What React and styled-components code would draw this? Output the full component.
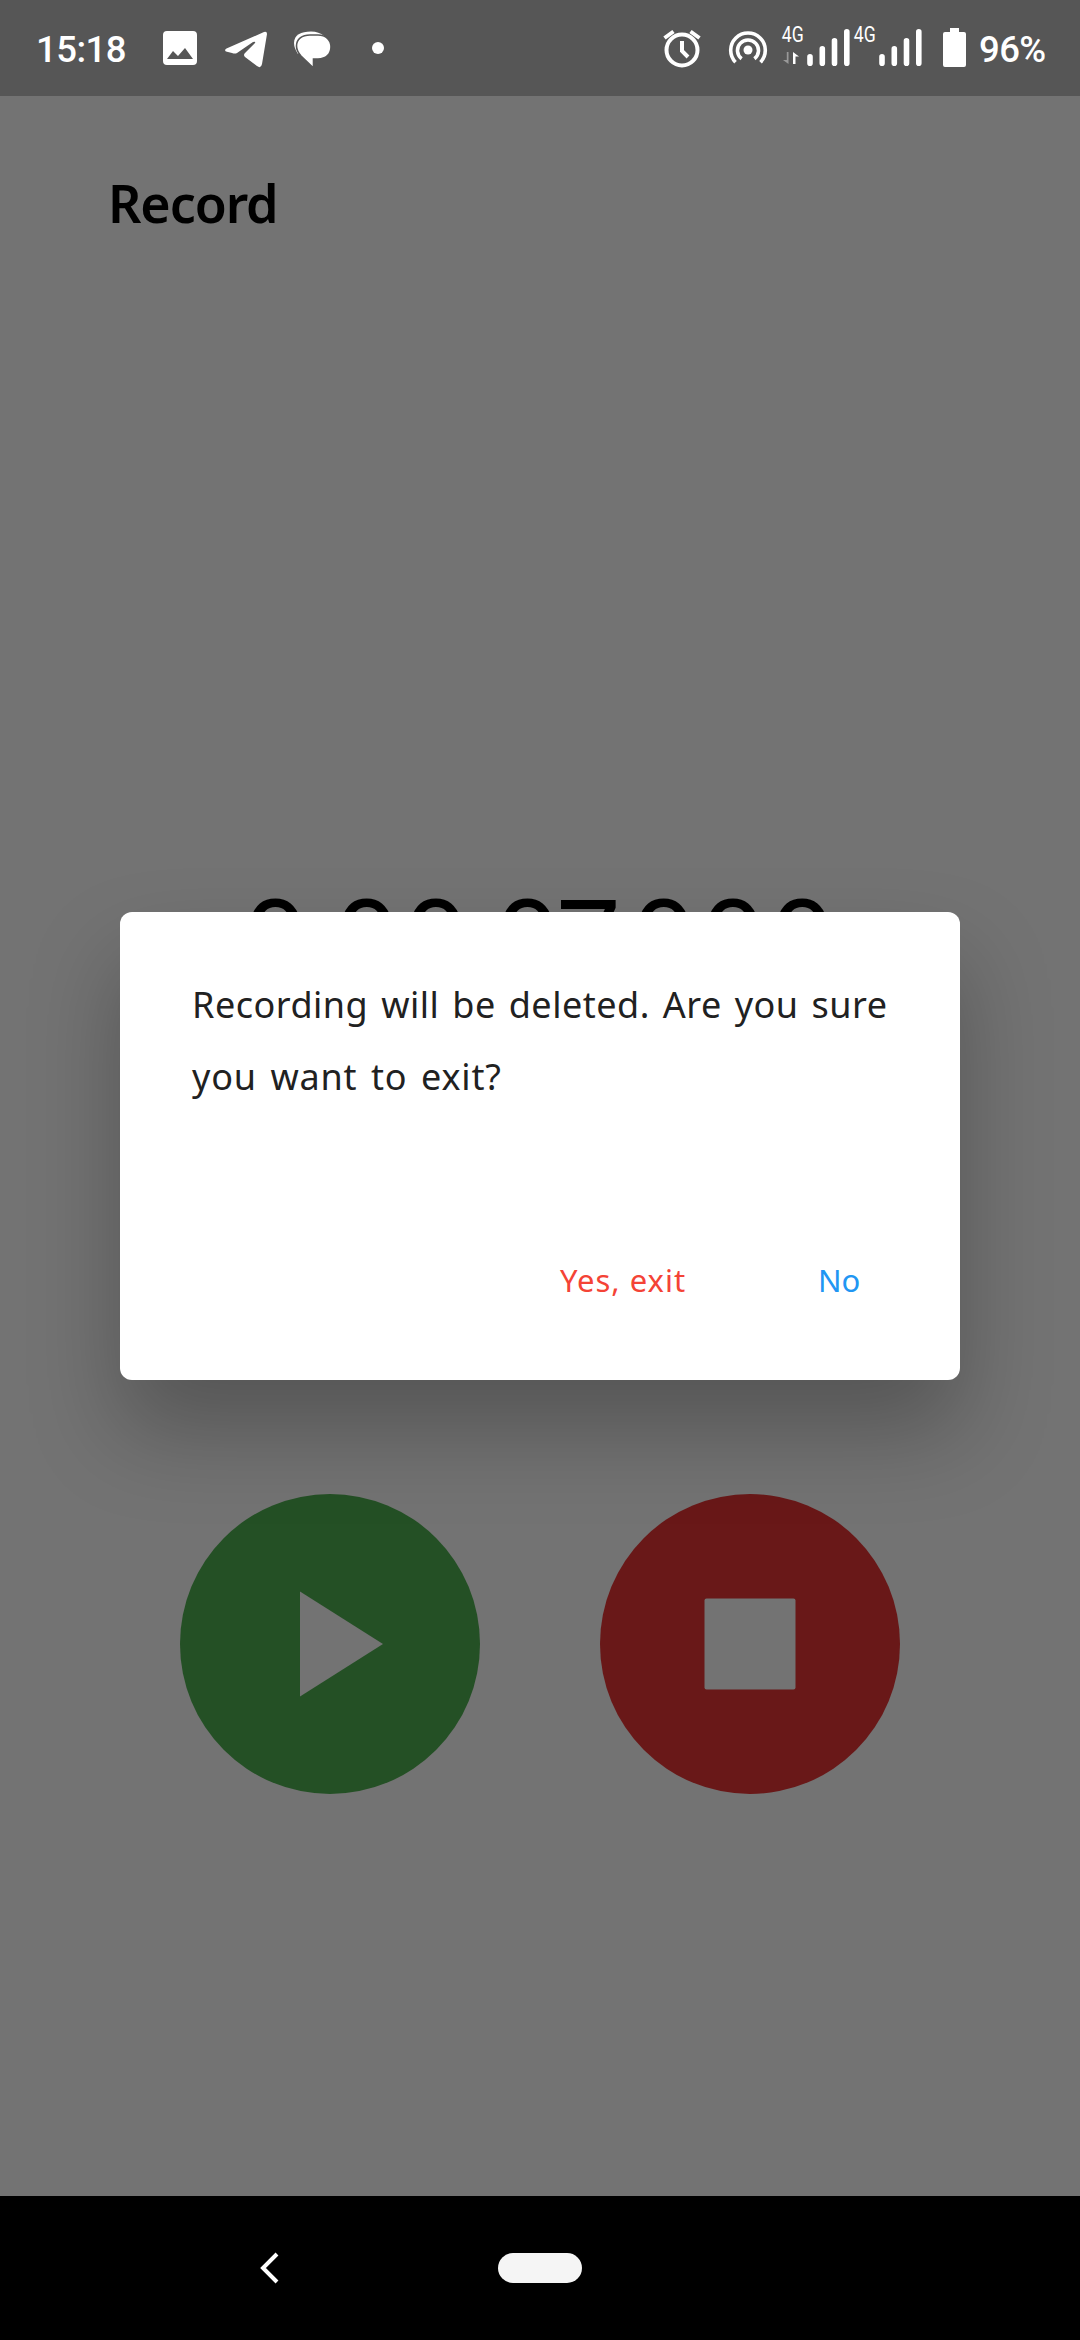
import React from "react";
import styled, { createGlobalStyle } from "styled-components";

const Global = createGlobalStyle`
  * { box-sizing: border-box; }
  body { margin: 0; background: #000; }
`;
const uiFont = `"Noto Sans", "Open Sans", sans-serif`;

const Screen = styled.div`
  width: 1080px; height: 2340px; position: relative; overflow: hidden;
  display: flex; flex-direction: column; background: #737373; font-family: ${uiFont};
`;
const StatusBar = styled.header`
  flex: none; height: 96px; background: #565656; color: #fff;
  display: flex; align-items: center; padding: 0 36px;
  font-family: Roboto, sans-serif; font-weight: 500;
`;
const StatusText = styled.span`
  font-size: 36.5px; line-height: 44px; letter-spacing: ${p => p.$spacing || 0}px; width: ${p => p.$w}px;
  white-space: nowrap; margin-left: ${p => p.$gap || 0}px; padding-top: 3px;
`;
const StatusIcon = styled.svg`
  flex: none; display: block; width: ${p => p.$w}px; height: 44px; margin-left: ${p => p.$gap || 0}px; overflow: visible;
`;
const Signal = styled.div`
  display: flex; width: 72px; height: 44px; margin-left: ${p => p.$gap || 0}px;
`;
const Network = styled.div`
  width: 25px; display: flex; flex-direction: column; align-items: flex-start; font-size: 22px; line-height: 24px; font-weight: 400;
`;
const NetworkLabel = styled.span`
  transform: scaleX(0.8); transform-origin: left; height: 24px; margin-top: -3px; padding-left: 1px;
`;
const DataArrows = styled.svg`
  margin: 5px 0 0 2px; display: block;
`;
const Spacer = styled.div`flex: 1;`;

const Page = styled.main`
  flex: 1; display: flex; flex-direction: column;
`;
const Title = styled.h1`
  margin: 70px 0 0 108px; font-size: 52px; line-height: 74px; font-weight: 600; color: #000; letter-spacing: -1.1px;
`;
const Timer = styled.div`
  margin-top: 627px; height: 140px; display: flex; justify-content: center; padding-right: 2px;
  font-size: 114px; line-height: 140px; color: #000; font-weight: 400;
`;
const Digit = styled.span`
  width: ${p => p.$w}px; text-align: center; display: flex; justify-content: center;
`;
const Controls = styled.div`
  margin-top: 487px; display: flex; justify-content: center; gap: 120px;
`;
const RoundButton = styled.button`
  width: 300px; height: 300px; border: 0; border-radius: 50%; padding: 0; background: ${p => p.$color};
  display: flex; align-items: center; justify-content: center;
`;
const Glyph = styled.svg`
  display: block; overflow: visible;
`;
const NavBar = styled.nav`
  flex: none; height: 144px; background: #000; display: flex; align-items: center; padding-left: 260px;
`;
const HomePill = styled.div`
  width: 84px; height: 30px; border-radius: 15px; background: #f5f5f5; margin-left: 218px;
`;
const Dialog = styled.section`
  position: absolute; left: 120px; top: 912px; width: 840px; height: 468px; background: #fff; border-radius: 12px;
  display: flex; flex-direction: column; padding: 57px 72px 0;
  box-shadow: 0 50px 90px 0 rgba(0,0,0,.26);
`;
const Message = styled.p`
  margin: 0; color: #212121; font-size: 36px; line-height: 72px; font-weight: 400;
`;
const Line = styled.span`
  display: block; white-space: nowrap; letter-spacing: ${p => p.$spacing}px; word-spacing: ${p => p.$words}px;
`;
const Actions = styled.div`
  display: flex; margin-top: 143px; padding-left: 368px;
`;
const Action = styled.button`
  border: 0; background: none; padding: 0; font: 400 31px/48px ${uiFont}; color: ${p => p.$color};
  letter-spacing: ${p => p.$spacing}px; width: ${p => p.$w}px; text-align: left; white-space: nowrap;
`;

const advance = { ":": 22, ".": 14, "7": 53 };

const Bars = () => (
  <StatusIcon $w={44} viewBox="0 0 44 44" stroke="#fff" strokeWidth="5.6" strokeLinecap="round">
    <path d="M4 37.200V30.800M16.300 37.200V22.800M28.500 37.200V14.800M40.800 37.200V5.800" />
  </StatusIcon>
);

export default function App() {
  return (
    <Screen>
      <Global />
      <StatusBar>
        <StatusText $w={91} $spacing={-0.5}>15:18</StatusText>
        <StatusIcon $w={34} $gap={36} viewBox="0 0 34 44" fill="#fff">
          <path fillRule="evenodd" d="M4 5H30Q34 5 34 9V35Q34 39 30 39H4Q0 39 0 35V9Q0 5 4 5ZM4 33H30L22 22L15 30L10 25Z" />
        </StatusIcon>
        <StatusIcon $w={42} $gap={28} viewBox="0 0 42 44" fill="#fff">
          <path d="M1.500 22.500 39 6Q42 5 42 8L37 38Q36 43 32 40L20 31Q18 29 20 27L30 17Q31 15 28 16L12 27Q10 28 7 27L1 25.500Q-1 24 1.500 22.500Z" />
        </StatusIcon>
        <StatusIcon $w={37} $gap={27} viewBox="0 0 37 44">
          <path fill="#fff" d="M0 17C0 9 7 5.500 17 5.500Q25 5.500 30 10L4 28Q0 22 0 17Z" />
          <path fill="#fff" stroke="#565656" strokeWidth="1.600" d="M16 9H24C32 9 37 14 37 21C37 28 32 33 24 33H19.500V42L7 30Q2.500 25 2.500 20C2.500 13 8 9 16 9Z" />
        </StatusIcon>
        <StatusIcon $w={12} $gap={41} viewBox="0 0 12 44"><circle cx="6" cy="22" r="6" fill="#fff" /></StatusIcon>
        <Spacer />
        <StatusIcon $w={38} viewBox="0 0 38 44" fill="none" stroke="#fff" strokeWidth="4">
          <circle cx="19" cy="24" r="15.500" /><path d="M19 15V25L25 31M1.500 12 10.500 5.500M27.500 5.500 36.500 12" />
        </StatusIcon>
        <StatusIcon $w={38} $gap={28} viewBox="0 0 38 44" fill="none" stroke="#fff" strokeWidth="3.600">
          <circle cx="19" cy="24" r="4.500" fill="#fff" stroke="none" />
          <path d="M12.600 32.800A10.500 10.500 0 1 1 25.400 32.800M6.500 36.200A17.300 17.300 0 1 1 31.500 36.200" />
        </StatusIcon>
        <Signal $gap={14}>
          <Network>
            <NetworkLabel>4G</NetworkLabel>
            <DataArrows width="16" height="12" viewBox="0 0 16 12"><path d="M3.800 0H5.500V12L0 8H3.800Z" fill="#999" /><path d="M10 12V0L16 4.500H12.500V12Z" fill="#fff" /></DataArrows>
          </Network>
          <Bars />
        </Signal>
        <Signal><Network><NetworkLabel>4G</NetworkLabel></Network><Bars /></Signal>
        <StatusIcon $w={23} $gap={18} viewBox="0 0 23 44" fill="#fff">
          <path d="M7 2H16V6H21Q23 6 23 8V39Q23 41 21 41H2Q0 41 0 39V8Q0 6 2 6H7Z" />
        </StatusIcon>
        <StatusText $w={65} $gap={13} $spacing={-0.6}>96%</StatusText>
      </StatusBar>
      <Page>
        <Title>Record</Title>
        <Timer>{"0:00:07.000".split("").map((c, i) => <Digit key={i} $w={advance[c] || 69.3}>{c}</Digit>)}</Timer>
        <Controls>
          <RoundButton $color="#245025" aria-label="Play">
            <Glyph width="84" height="106" viewBox="0 0 84 106"><path d="M12 0.500 95 53 12 105.500Z" fill="#737373" /></Glyph>
          </RoundButton>
          <RoundButton $color="#691818" aria-label="Stop">
            <Glyph width="92" height="92" viewBox="0 0 92 92"><rect x="0.500" y="0.500" width="91" height="91" rx="2" fill="#737373" /></Glyph>
          </RoundButton>
        </Controls>
      </Page>
      <NavBar>
        <svg width="20" height="32" viewBox="0 0 20 32"><path d="M17 2 3 16 17 30" fill="none" stroke="#fff" strokeWidth="4" /></svg>
        <HomePill />
      </NavBar>
      <Dialog role="dialog">
        <Message>
          <Line $spacing={0.5} $words={3.1}>Recording will be deleted. Are you sure</Line>
          <Line $spacing={0.8} $words={3.5}>you want to exit?</Line>
        </Message>
        <Actions>
          <Action $color="#f44336" $w={258} $spacing={1}>Yes, exit</Action>
          <Action $color="#2196f3" $w={60} $spacing={0}>No</Action>
        </Actions>
      </Dialog>
    </Screen>
  );
}
